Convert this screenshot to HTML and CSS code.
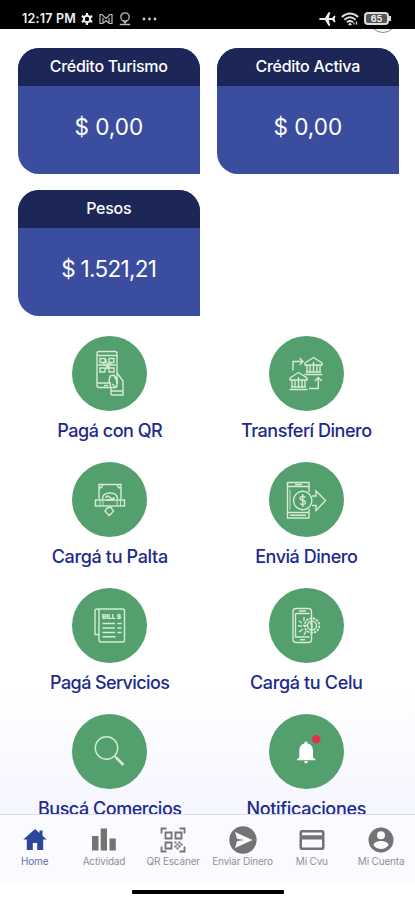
FILE: index.html
```html
<!DOCTYPE html>
<html lang="es">
<head>
    <meta charset="UTF-8">
    <meta name="viewport" content="width=device-width, initial-scale=1.0">
    <title>Palta</title>
    <link rel="stylesheet" href="styles.css">
</head>
<body>
    <div class="app">
        <header class="status-bar">
            <div class="status-left">
                <span class="time">12:17 PM</span>
                <svg class="gear" width="12" height="12" viewBox="0 0 12 12">
                    <circle cx="6" cy="6" r="3.2" fill="none" stroke="#eee" stroke-width="2"/>
                    <path d="M6 0v2.5M6 9.5V12M.8 3l2.1 1.2M9.1 7.8L11.2 9M.8 9l2.1-1.2M9.1 4.2L11.2 3" stroke="#eee" stroke-width="2.2"/>
                </svg>
                <svg class="mail" width="14" height="12" viewBox="0 0 14 12" fill="none" stroke="#bbb" stroke-width="1.2">
                    <path d="M4 10.5H1V1.5h2l4 4 4-4h2v9h-3M4 10.5V4.8M10 10.5V4.8M4.5 10L7 7.5 9.5 10"/>
                </svg>
                <svg class="pin" width="12" height="14" viewBox="0 0 12 14" fill="none" stroke="#bbb" stroke-width="1.3">
                    <circle cx="6" cy="5" r="4.2"/>
                    <path d="M4 8.5L6 11l2-2.5M.8 12.5h10.4"/>
                </svg>
                <svg class="more" width="15" height="4" viewBox="0 0 15 4" fill="#ccc">
                    <circle cx="2" cy="2" r="1.4"/><circle cx="7.5" cy="2" r="1.4"/><circle cx="13" cy="2" r="1.4"/>
                </svg>
            </div>
            <div class="status-right">
                <svg width="17" height="14" viewBox="0 0 17 14" fill="#eee">
                    <path d="M0 7Q0 6 2 6h4L9.5.3h1.8L9.800 6h3.4L15 3.8h1.5L15.7 7l.8 3.2H15L13.2 8H9.8l1.5 5.7H9.5L6 8H2Q0 8 0 7z"/>
                </svg>
                <svg width="18" height="14" viewBox="0 0 18 14" fill="none" stroke="#ddd" stroke-width="1.9">
                    <path d="M.8 5Q9-2 17.2 5M3.4 7.7Q9 3 14.6 7.7M6 10.2Q9 7.8 12 10.2"/>
                    <path d="M9 10.5l2 2-2 1-2-1z" fill="#ddd" stroke="none"/>
                    <path d="M13 12.5v-2M15.5 12.5v-3" stroke-width="1.2"/>
                </svg>
                <div class="battery">65</div>
            </div>
        </header>

        <main class="content">
            <div class="avatar-edge"></div>
            <section class="cards">
                <article class="card">
                    <h2>Crédito Turismo</h2>
                    <p>$ 0,00</p>
                </article>
                <article class="card">
                    <h2>Crédito Activa</h2>
                    <p>$ 0,00</p>
                </article>
                <article class="card">
                    <h2>Pesos</h2>
                    <p class="long">$ 1.521,21</p>
                </article>
            </section>

            <section class="actions">
                <a class="action">
                    <svg class="circle" viewBox="0 0 75 75">
                        <rect x="25" y="15.5" width="20" height="36" rx="2"/>
                        <path d="M25 19.5h20M25 47h14M32 49.5h4"/>
                        <path d="M28 22.5h5v4h-5zM37 22.500h5v4h-5zM28 32h5v4h-5zM37 32h5v4h-5zM26 29h18M30 26l7 7M34 23v3l3 3v6M40 26l-6 7"/>
                        <path d="M39 59v-7l-2-7 1-5 4-1 3 4v5M45 37l6 8v14H39M39 55h12M42 40l4 7M40 48l4 3"/>
                    </svg>
                    <span>Pagá con QR</span>
                </a>
                <a class="action">
                    <svg class="circle" viewBox="0 0 75 75">
                        <path d="M24 34.5v-9h9M30.5 22l3.5 3.5-3.5 3.5M40 52.5h9.3V42M45.8 45l3.5-3.5 3.5 3.5"/>
                        <path d="M36 27l8.5-5.5L53 27v2H36zM35.500 38.5h18M37 36h15M38 29.5V36M41 29.5V36M44.5 26v10M48 29.5V36M51 29.5V36"/>
                        <path d="M21 42l8.5-5.5L38 42v2H21zM20.5 53.5h18M22 51h15M23 44.5V51M26 44.5V51M29.5 41v10M33 44.5V51M36 44.5V51"/>
                    </svg>
                    <span>Transferí Dinero</span>
                </a>
                <a class="action wide">
                    <svg class="circle" viewBox="0 0 75 75">
                        <path d="M27 37V22.5h22V37"/>
                        <path d="M27 26q3.500 0 3.500-3.500M49 26q-3.500 0-3.500-3.500M30.500 37q0-6 7.500-6t7.500 6"/>
                        <path d="M34 36q0-2 2-2l4 3q2 0 2-2M34 38h8"/>
                        <rect x="23.5" y="38" width="29" height="6"/>
                        <path class="thin" d="M28 38v6M31 38v6M45 38v6M48.5 38v6"/>
                        <path d="M35.500 45.500h3.500l2.500 3.700-4.300 4.300-4.200-4.300z"/>
                    </svg>
                    <span>Cargá tu Palta</span>
                </a>
                <a class="action">
                    <svg class="circle" viewBox="0 0 75 75">
                        <path d="M40 30v-9.5H18.5V56H40v-9M18.5 24.5H40M18.5 50.5H40M26 22.5h7M21 53.3h16"/>
                        <path class="thin" d="M21 27.5v20"/>
                        <circle cx="33.7" cy="38.5" r="9.2"/>
                        <path d="M36.5 35.5q-2.5-2-4.5-.7c-2 1.5-.8 3 1.5 3.5s4 1.5 2.5 3.5q-2.5 1.8-5-.3M33.7 32v13"/>
                        <path d="M43 34h4v-5l9.500 9.500L47 48.500v-5h-4"/>
                    </svg>
                    <span>Enviá Dinero</span>
                </a>
                <a class="action tight">
                    <svg class="circle" viewBox="0 0 75 75">
                        <path d="M27 46.5h-4V23q0-2 2-2h25.500q2 0 2 2v29q0 2-2 2H29q-2 0-2-2V21"/>
                        <text x="30" y="30.8" textLength="19">BILL $</text>
                        <path d="M30.5 35.5H43M45.5 35.5h4M30.5 40H43M45.5 40h4M30.5 44.5H43M45.5 44.5h4M30.5 48.7h13" stroke-width="1.6"/>
                    </svg>
                    <span>Pagá Servicios</span>
                </a>
                <a class="action wide">
                    <svg class="circle" viewBox="0 0 75 75">
                        <rect x="24" y="20.5" width="18.5" height="34" rx="3"/>
                        <path d="M26.5 25.5h14M30 23h7M26.5 25.5V49h14M31 51.7h5"/>
                        <circle cx="43" cy="37.5" r="7.3" stroke-width="1.8" stroke-dasharray="2.5 1"/>
                        <circle cx="43" cy="37.5" r="4.5"/>
                        <path d="M43 34.5v6M41 36l2-1.5M30 33l3 2M29 38h4M30 44l4-3M35 29v4M35 47l2-4M34 37.5h4"/>
                    </svg>
                    <span>Cargá tu Celu</span>
                </a>
                <a class="action">
                    <svg class="circle" viewBox="0 0 75 75">
                        <circle cx="34.5" cy="34" r="11.2"/>
                        <path d="M42.5 42l2 2"/>
                        <path class="handle" d="M44 43.5l7.500 7.500"/>
                    </svg>
                    <span>Buscá Comercios</span>
                </a>
                <a class="action wide">
                    <svg class="circle" viewBox="0 0 75 75">
                        <path class="solid" d="M37 27.5q1.7 0 1.700 2c4 1 5.3 4 5.3 7.500v6.500l2.300 1.700v1H28v-1l2.300-1.700V37c0-3.500 1.200-6.500 5-7.500q0-2 1.700-2zM35 47.200h4q-.3 2-2 2t-2-2z"/>
                        <circle class="dot" cx="47.3" cy="25.3" r="4.2"/>
                    </svg>
                    <span>Notificaciones</span>
                </a>
            </section>
        </main>

        <nav class="tabs">
            <a class="tab active">
                <svg width="28" height="28" viewBox="0 0 28 28">
                    <path d="M14 3L2.300 13.500h3.500V24h6v-7h4.400v7h6V13.500h3.500L21.500 9.700V4.500h-3v2.600z"/>
                </svg>
                <span>Home</span>
            </a>
            <a class="tab">
                <svg width="28" height="28" viewBox="0 0 28 28">
                    <path d="M2 10h6.500v14.500H2zM10.700 2.500H17v22h-6.300zM19.500 12.500h6.300v12h-6.300z"/>
                </svg>
                <span>Actividad</span>
            </a>
            <a class="tab">
                <svg width="28" height="28" viewBox="0 0 28 28" class="lines">
                    <path d="M2.500 7.500v-5h5M20.500 2.500h5v5M2.500 20.500v5h5M25.500 20.500v5h-5M6.500 6.500h6v6h-6zM16.500 6.500h6v6h-6zM6.500 16.500h6v6h-6z"/>
                    <path d="M15.500 15.500h2v2h-2zM19.500 15.500h2v2h-2zM17.500 17.500h2v2h-2zM21.500 17.500h2v2h-2zM15.500 19.500h2v2h-2zM19.500 19.500h2v2h-2zM17.500 21.500h2v2h-2z" class="fill"/>
                </svg>
                <span>QR Escáner</span>
            </a>
            <a class="tab">
                <svg width="28" height="28" viewBox="0 0 28 28">
                    <path fill-rule="evenodd" d="M14 .3a13.700 13.700 0 1 1 0 27.400a13.700 13.700 0 1 1 0-27.400zM6 6l2 6.800 7 1.200-7 1.200L6 22l17.500-8z"/>
                </svg>
                <span>Enviar Dinero</span>
            </a>
            <a class="tab">
                <svg width="28" height="28" viewBox="0 0 28 28">
                    <path fill-rule="evenodd" d="M4 4h20q2.500 0 2.500 2.500v15Q26.500 24 24 24H4q-2.500 0-2.500-2.500v-15Q1.500 4 4 4zM4 6.500v2.800h20V6.500zM4 13.500v8h20v-8z"/>
                </svg>
                <span>Mi Cvu</span>
            </a>
            <a class="tab">
                <svg width="28" height="28" viewBox="0 0 28 28">
                    <path fill-rule="evenodd" d="M14 1.500a12.500 12.500 0 1 1 0 25a12.500 12.500 0 1 1 0-25zM14 5.200a4 4 0 1 0 0 8a4 4 0 1 0 0-8zM6.500 19c1.500 2.500 4.200 4 7.500 4s6-1.500 7.500-4c0-2.500-5-3.900-7.500-3.900S6.500 16.500 6.500 19z"/>
                </svg>
                <span>Mi Cuenta</span>
            </a>
        </nav>
        <footer class="home-area"><div class="home-line"></div></footer>
    </div>
</body>
</html>
```

FILE: styles.css
```css
* {
    box-sizing: border-box;
}

body {
    margin: 0;
    background: #fff;
    font-family: Inter, Roboto, sans-serif;
}

.app {
    width: 415px;
    height: 900px;
    display: flex;
    flex-direction: column;
    overflow: hidden;
}

/* Status bar */
.status-bar {
    flex: 0 0 28.5px;
    display: flex;
    justify-content: space-between;
    padding: 8px 24px 0 22px;
    background: #000;
    color: #eee;
}

.status-left,
.status-right {
    display: flex;
    align-items: center;
    height: 21px;
}

.time {
    width: 55px;
    font-size: 12.5px;
    font-weight: 600;
    letter-spacing: 0.2px;
    white-space: nowrap;
}

.gear {
    margin-left: 4px;
}

.mail {
    margin-left: 6px;
}

.pin {
    margin-left: 6px;
}

.more {
    margin-left: 11px;
}

.status-right {
    gap: 5px;
}

.battery {
    position: relative;
    width: 25px;
    height: 13px;
    margin-right: 2px;
    border: 2px solid #ddd;
    border-radius: 4px;
    background: #555;
    font-size: 9px;
    font-weight: 700;
    line-height: 9px;
    text-align: center;
}

.battery::after {
    content: "";
    position: absolute;
    right: -4px;
    top: 2px;
    width: 2px;
    height: 5px;
    background: #ddd;
}

/* Main content, cut off by the tab bar */
.content {
    position: relative;
    flex: 1;
    min-height: 0;
    overflow: hidden;
    padding-top: 19.5px;
    background: linear-gradient(#fff 84%, #f5f6ff);
}

.avatar-edge {
    position: absolute;
    top: -24px;
    left: 369px;
    width: 28px;
    height: 28px;
    border: 1.5px solid #5a9c88;
    border-radius: 50%;
}

.cards {
    display: grid;
    grid-template-columns: 182.5px 182.5px;
    gap: 16px 16.5px;
    padding-left: 17.5px;
    margin-top: -0.2px;
}

.card {
    height: 126px;
    overflow: hidden;
    border-radius: 21px 21px 0 21px;
    background: #3b4d9f;
    color: #fff;
    text-align: center;
}

.card h2 {
    height: 38px;
    margin: 0;
    background: #1c2657;
    font-size: 16px;
    font-weight: 500;
    letter-spacing: -0.27px;
    line-height: 37px;
}

.card p {
    margin: 0;
    font-size: 22.5px;
    font-weight: 400;
    line-height: 82px;
}

.card .long {
    letter-spacing: -0.7px;
}

/* Actions */
.actions {
    display: grid;
    grid-template-columns: 196.5px 196.5px;
    grid-auto-rows: 126px;
    padding: 19.5px 0 0 11.5px;
}

.action {
    display: flex;
    flex-direction: column;
    align-items: center;
    color: #1c2a8c;
    font-size: 18px;
    font-weight: 500;
    letter-spacing: -0.47px;
    line-height: 24px;
    white-space: nowrap;
}

.action.wide {
    letter-spacing: -0.34px;
}

.action.tight {
    letter-spacing: -0.6px;
}

.circle {
    width: 75px;
    height: 75px;
    margin-bottom: 8px;
    border-radius: 50%;
    background: #549f6e;
    fill: none;
    stroke: #d5ecd2;
    stroke-width: 1.4;
}

.circle .thin {
    stroke-width: 0.9;
}

.circle .handle {
    stroke-width: 2.6;
}

.circle .solid {
    fill: #fff;
    stroke: none;
}

.circle .dot {
    fill: #e52d4d;
    stroke: none;
}

.circle text {
    fill: #e3f3df;
    stroke: none;
    font-size: 6.5px;
    font-weight: 800;
    letter-spacing: 0;
}

/* Tab bar */
.tabs {
    flex: 0 0 70px;
    display: grid;
    grid-template-columns: repeat(6, 69.3px);
    padding-top: 11px;
    border-top: 1.5px solid #d9dcf3;
    background: #fafaff;
}

.tab {
    display: flex;
    flex-direction: column;
    align-items: center;
    color: #929295;
    fill: #737373;
    font-size: 10px;
    letter-spacing: -0.18px;
    line-height: 13px;
    white-space: nowrap;
}

.tab svg {
    margin-bottom: 1px;
}

.tab.active {
    color: #6370a9;
    fill: #2c4699;
}

.tab .lines {
    fill: none;
    stroke: #737373;
    stroke-width: 1.8;
}

.tab .fill {
    fill: #737373;
    stroke: none;
}

.home-area {
    flex: 0 0 16px;
    padding-top: 6px;
    background: #fff;
}

.home-line {
    width: 152px;
    height: 3.5px;
    margin: 0 auto;
    border-radius: 1px;
    background: #000;
}
```
